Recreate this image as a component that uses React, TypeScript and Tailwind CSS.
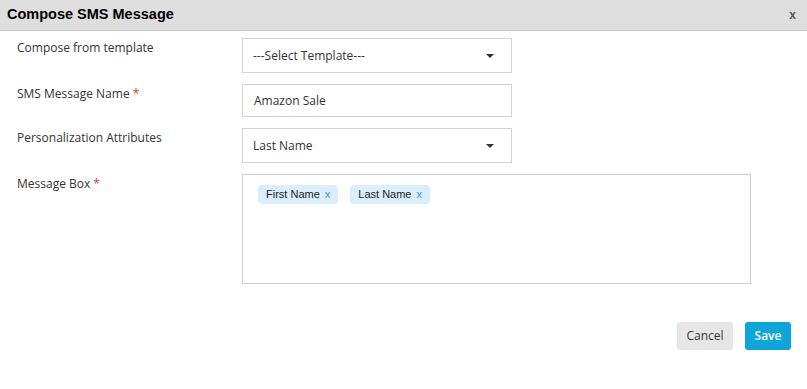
import { FC } from "react";

const Caret: FC = () => (
  <svg width="8" height="4" viewBox="0 0 8 4" className="shrink-0">
    <path d="M0 0 L8 0 L4 4 Z" fill="#333" />
  </svg>
);

const Tag: FC<{ label: string }> = ({ label }) => (
  <span className="flex h-[19px] items-center gap-[5px] rounded-[4px] bg-[#dbeefd] px-[8px] font-['Liberation_Sans',Arial,sans-serif] text-[11px] text-[#222]">
    {label}
    <span className="text-[#4a90c8]">x</span>
  </span>
);

const Label: FC<{ text: string; required?: boolean }> = ({ text, required }) => (
  <div className="w-[242px] shrink-0 pl-[17px] pt-[1px] text-[12px] text-[#333]">
    {text}
    {required && <span className="ml-[3px] text-[#e5342b]">*</span>}
  </div>
);

const App: FC = () => {
  return (
    <div className="h-[389px] w-[807px] bg-white font-['Open_Sans',sans-serif]">
      <div className="flex h-[31px] items-center justify-between border-b border-[#c9c9c9] bg-[#dedede] pl-[7px] pr-[11px]">
        <h2 className="font-['Liberation_Sans',Arial,sans-serif] text-[14.5px] font-bold text-black">
          Compose SMS Message
        </h2>
        <span className="font-['Liberation_Sans',Arial,sans-serif] text-[12px] font-bold text-[#555]">
          x
        </span>
      </div>

      <div className="flex flex-col gap-[11px] pt-[7px]">
        <div className="flex">
          <Label text="Compose from template" />
          <div className="flex h-[35px] w-[270px] items-center justify-between border border-[#d3d3d3] pl-[10px] pr-[17px] text-[12px] text-[#333]">
            ---Select Template---
            <Caret />
          </div>
        </div>

        <div className="flex">
          <Label text="SMS Message Name" required />
          <div className="flex h-[33px] w-[270px] items-center border border-[#d3d3d3] pl-[11px] text-[12px] text-[#333]">
            Amazon Sale
          </div>
        </div>

        <div className="flex">
          <Label text="Personalization Attributes" />
          <div className="flex h-[35px] w-[270px] items-center justify-between border border-[#d3d3d3] pl-[10px] pr-[17px] text-[12px] text-[#333]">
            Last Name
            <Caret />
          </div>
        </div>

        <div className="flex">
          <Label text="Message Box" required />
          <div className="flex h-[110px] w-[509px] items-start gap-[12px] border border-[#cfcfcf] pl-[15px] pt-[10px]">
            <Tag label="First Name" />
            <Tag label="Last Name" />
          </div>
        </div>
      </div>

      <div className="mt-[38px] flex justify-end gap-[12px] pr-[16px]">
        <button className="h-[28px] w-[56px] rounded-[3px] bg-[#e6e6e6] text-[12px] text-[#333]">
          Cancel
        </button>
        <button className="h-[28px] w-[46px] rounded-[3px] bg-[#0ea5da] text-[12px] font-semibold text-white">
          Save
        </button>
      </div>
    </div>
  );
};

export default App;
